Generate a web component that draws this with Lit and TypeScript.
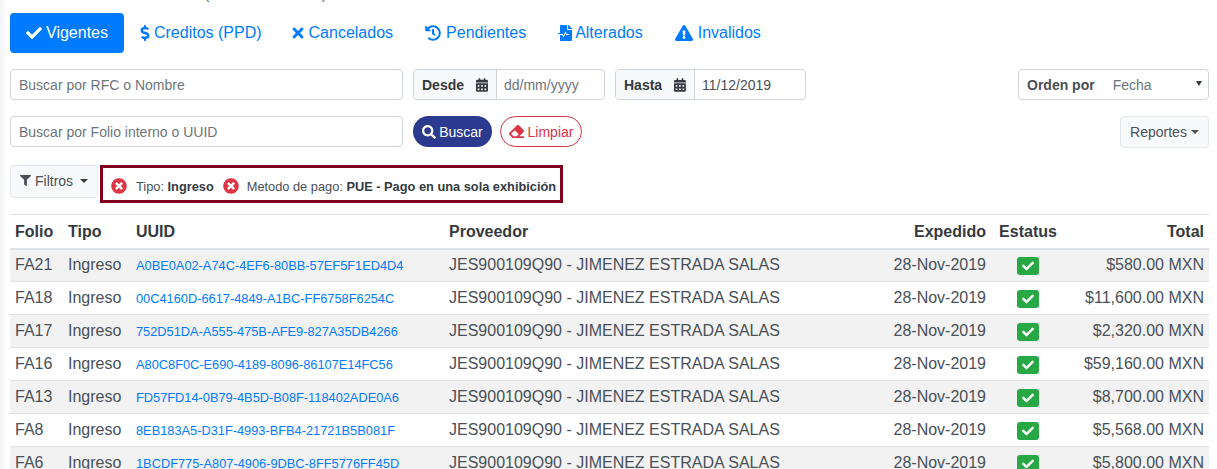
import { LitElement, html, css, svg } from "lit";
import { customElement } from "lit/decorators.js";

const rows = [
  ["FA21", "A0BE0A02-A74C-4EF6-80BB-57EF5F1ED4D4", "$580.00 MXN"],
  ["FA18", "00C4160D-6617-4849-A1BC-FF6758F6254C", "$11,600.00 MXN"],
  ["FA17", "752D51DA-A555-475B-AFE9-827A35DB4266", "$2,320.00 MXN"],
  ["FA16", "A80C8F0C-E690-4189-8096-86107E14FC56", "$59,160.00 MXN"],
  ["FA13", "FD57FD14-0B79-4B5D-B08F-118402ADE0A6", "$8,700.00 MXN"],
  ["FA8", "8EB183A5-D31F-4993-BFB4-21721B5B081F", "$5,568.00 MXN"],
  ["FA6", "1BCDF775-A807-4906-9DBC-8FF5776FF45D", "$5,800.00 MXN"],
];

const P = {
  check: "M173.898 439.404l-166.4-166.4c-9.997-9.997-9.997-26.206 0-36.204l36.203-36.204c9.997-9.998 26.207-9.998 36.204 0L192 312.69 432.095 72.596c9.997-9.997 26.207-9.997 36.204 0l36.203 36.204c9.997 9.997 9.997 26.206 0 36.204l-294.4 294.401c-9.998 9.997-26.207 9.997-36.204-.001z",
  dollar: "M209.2 233.4l-108-31.6C88.7 198.2 80 186.5 80 173.5c0-16.3 13.2-29.5 29.5-29.5h66.3c12.2 0 24.2 3.7 34.2 10.5 6.1 4.1 14.3 3.1 19.5-2l34.8-34c7.1-6.9 6.1-18.4-1.8-24.5C238 74.8 207.4 64.1 176 64V16c0-8.8-7.2-16-16-16h-32c-8.8 0-16 7.2-16 16v48h-2.5C45.8 64-5.4 118.7.5 183.6c4.2 46.1 39.4 83.6 83.8 96.6l102.5 30c12.5 3.7 21.2 15.3 21.2 28.3 0 16.3-13.2 29.5-29.5 29.5h-66.3C100 368 88 364.3 78 357.500c-6.1-4.100-14.300-3.100-19.500 2l-34.800 34c-7.100 6.900-6.100 18.400 1.800 24.500 24.500 19.200 55.100 29.900 86.500 30v48c0 8.800 7.200 16 16 16h32c8.800 0 16-7.200 16-16v-48.200c46.600-.9 90.300-28.600 105.700-72.700 21.500-61.600-14.600-124.800-72.500-141.700z",
  times: "M242.72 256l100.07-100.07c12.28-12.28 12.28-32.19 0-44.48l-22.24-22.24c-12.28-12.28-32.19-12.28-44.48 0L176 189.28 75.93 89.21c-12.28-12.28-32.19-12.28-44.48 0L9.21 111.45c-12.28 12.28-12.28 32.19 0 44.48L109.28 256 9.21 356.07c-12.28 12.28-12.28 32.19 0 44.48l22.24 22.24c12.28 12.28 32.2 12.28 44.48 0L176 322.72l100.07 100.07c12.28 12.28 32.2 12.28 44.48 0l22.24-22.24c12.28-12.28 12.28-32.19 0-44.48L242.72 256z",
  history: "M504 255.531c.253 136.64-111.18 248.372-247.82 248.468-59.015.042-113.223-20.53-155.822-54.911-11.077-8.94-11.905-25.541-1.839-35.607l11.267-11.267c8.609-8.609 22.353-9.551 31.891-1.984C173.062 425.135 212.781 440 256 440c101.705 0 184-82.311 184-184 0-101.705-82.311-184-184-184-48.814 0-93.149 18.969-126.068 49.932l50.754 50.754c10.08 10.08 2.941 27.314-11.313 27.314H24c-8.837 0-16-7.163-16-16V38.627c0-14.254 17.234-21.393 27.314-11.314l49.372 49.372C129.209 34.136 189.552 8 256 8c136.81 0 247.747 110.78 248 247.531zm-180.912 78.784l9.823-12.63c8.138-10.463 6.253-25.542-4.21-33.679L288 256.349V152c0-13.255-10.745-24-24-24h-16c-13.255 0-24 10.745-24 24v135.651l65.409 50.874c10.463 8.137 25.541 6.253 33.679-4.21z",
  file: "M288 132V0H88C74.7 0 64 10.7 64 24v232H8c-4.4 0-8 3.6-8 8v16c0 4.4 3.6 8 8 8h140.9c3 0 5.8 1.7 7.2 4.4l19.9 39.8 56.8-113.7c2.9-5.9 11.4-5.900 14.300 0l34.700 69.500H352c8.800 0 16 7.200 16 16s-7.200 16-16 16h-89.900L240 275.800l-56.800 113.700c-2.900 5.900-11.400 5.900-14.300 0L134.100 320H64v168c0 13.300 10.700 24 24 24h336c13.300 0 24-10.700 24-24V160H316c-15.400 0-28-12.600-28-28zm153-27L343.100 7c-4.500-4.500-10.600-7-17-7H320v128h128v-6.100c0-6.300-2.500-12.400-7-16.900z",
  warn: "M569.517 440.013C587.975 472.007 564.806 512 527.94 512H48.054c-36.937 0-59.999-40.055-41.577-71.987L246.423 23.985c18.467-32.009 64.72-31.951 83.154 0l239.94 416.028zM288 354c-25.405 0-46 20.595-46 46s20.595 46 46 46 46-20.595 46-46-20.595-46-46-46zm-43.673-165.346l7.418 136c.347 6.364 5.609 11.346 11.982 11.346h48.546c6.373 0 11.635-4.982 11.982-11.346l7.418-136c.375-6.874-5.098-12.654-11.982-12.654h-63.383c-6.884 0-12.356 5.78-11.981 12.654z",
  cal: "M0 464c0 26.500 21.500 48 48 48h352c26.500 0 48-21.500 48-48V192H0v272zm320-196c0-6.600 5.400-12 12-12h40c6.600 0 12 5.400 12 12v40c0 6.600-5.400 12-12 12h-40c-6.600 0-12-5.400-12-12v-40zm0 128c0-6.600 5.400-12 12-12h40c6.600 0 12 5.400 12 12v40c0 6.600-5.400 12-12 12h-40c-6.600 0-12-5.400-12-12v-40zM192 268c0-6.600 5.400-12 12-12h40c6.600 0 12 5.400 12 12v40c0 6.600-5.400 12-12 12h-40c-6.600 0-12-5.400-12-12v-40zm0 128c0-6.600 5.400-12 12-12h40c6.600 0 12 5.400 12 12v40c0 6.600-5.400 12-12 12h-40c-6.600 0-12-5.400-12-12v-40zM64 268c0-6.600 5.400-12 12-12h40c6.600 0 12 5.400 12 12v40c0 6.600-5.400 12-12 12H76c-6.600 0-12-5.400-12-12v-40zm0 128c0-6.600 5.400-12 12-12h40c6.600 0 12 5.400 12 12v40c0 6.600-5.400 12-12 12H76c-6.600 0-12-5.400-12-12v-40zM400 64h-48V16c0-8.800-7.200-16-16-16h-32c-8.800 0-16 7.200-16 16v48H160V16c0-8.800-7.200-16-16-16h-32c-8.800 0-16 7.200-16 16v48H48C21.500 64 0 85.500 0 112v48h448v-48c0-26.500-21.500-48-48-48z",
  search: "M505 442.7L405.3 343c-4.500-4.500-10.600-7-17-7H372c27.600-35.300 44-79.700 44-128C416 93.100 322.900 0 208 0S0 93.100 0 208s93.100 208 208 208c48.300 0 92.700-16.400 128-44v16.300c0 6.400 2.500 12.500 7 17l99.700 99.700c9.400 9.400 24.600 9.400 33.900 0l28.300-28.300c9.400-9.400 9.400-24.600.1-34zM208 336c-70.700 0-128-57.200-128-128 0-70.700 57.200-128 128-128 70.700 0 128 57.200 128 128 0 70.700-57.200 128-128 128z",
  eraser: "M497.941 273.941c18.745-18.745 18.745-49.137 0-67.882l-160-160c-18.745-18.745-49.136-18.746-67.883 0l-256 256c-18.745 18.745-18.745 49.137 0 67.882l96 96A48.004 48.004 0 0 0 144 480h356c6.627 0 12-5.373 12-12v-40c0-6.627-5.373-12-12-12H355.883l142.058-142.059zm-302.627-62.627l137.373 137.373L265.373 416H150.628l-80-80 124.686-124.686z",
  filter: "M487.976 0H24.028C2.710 0-8.047 25.866 7.058 40.971L192 225.941V432c0 7.831 3.821 15.170 10.237 19.662l80 55.980C298.020 518.690 320 507.493 320 487.980V225.941l184.947-184.970C520.021 25.896 509.338 0 487.976 0z",
  xc: "M256 8C119 8 8 119 8 256s111 248 248 248 248-111 248-248S393 8 256 8zm121.600 313.100c4.700 4.700 4.700 12.300 0 17L338 377.600c-4.700 4.700-12.300 4.700-17 0L256 312l-65.100 65.600c-4.700 4.700-12.300 4.700-17 0L134.400 338c-4.700-4.700-4.700-12.300 0-17l65.600-65-65.600-65.100c-4.700-4.700-4.700-12.300 0-17l39.600-39.600c4.700-4.700 12.300-4.700 17 0l65 65.700 65.100-65.600c4.700-4.700 12.300-4.700 17 0l39.600 39.600c4.700 4.700 4.700 12.300 0 17L312 256l65.600 65.100z",
};

const fa = (d: string, vw: number, w: number, h = 16, cls = "ic") =>
  html`<svg class=${cls} width=${w} height=${h} viewBox="0 0 ${vw} 512" fill="currentColor">${svg`<path d=${d}/>`}</svg>`;
const caret = html`<span class="caret"></span>`;

@customElement("app-root")
export class AppRoot extends LitElement {
  static styles = css`
    :host { display: block; height: 469px; overflow: hidden; font-family: "Liberation Sans", Arial, sans-serif; font-size: 16px; color: #212529; background: linear-gradient(to right, #f5f5f5, #fff 8px); }
    .page { padding: 0 8px 0 10px; }
    .clip { height: 3px; overflow: hidden; width: 123px; margin: 0 0 10px 194px; display: flex; justify-content: space-between; color: #6c757d; font-size: 16px; line-height: 18px; }
    .clip span { margin-top: -15px; display: block; }
    .tabs { display: flex; height: 40px; font-size: 16px; color: #007bff; }
    .tab { display: flex; align-items: center; padding: 0 16px; border-radius: 4px; white-space: nowrap; }
    .tab.active { background: #007bff; color: #fff; }
    .tab.tight { padding-right: 14px; }
    .g3 { gap: 3px; } .g4 { gap: 4px; } .g5 { gap: 5px; }
    .ic { flex: none; }
    .row { display: flex; align-items: flex-start; }
    .r1 { margin-top: 16px; height: 31px; }
    .r2 { margin-top: 16px; height: 32px; }
    .input { box-sizing: border-box; height: 31px; border: 1px solid #ced4da; border-radius: 4px; padding: 0 8px; display: flex; align-items: center; font-size: 14px; color: #6c757d; background: #fff; }
    .wide { width: 393px; }
    .group { display: flex; height: 31px; box-sizing: border-box; border: 1px solid #ced4da; border-radius: 4px; font-size: 14px; overflow: hidden; background: #fff; }
    .label { background: #f8f9fa; border-right: 1px solid #ced4da; display: flex; align-items: center; gap: 12px; padding: 0 8px; font-weight: 700; color: #343a40; box-sizing: border-box; }
    .val { display: flex; align-items: center; padding: 0 7px; color: #6c757d; }
    .val.filled { color: #495057; }
    .cal { color: #343a40; }
    .desde { margin-left: 10px; width: 192px; }
    .desde .label { width: 83px; }
    .hasta { margin-left: 10px; width: 191px; }
    .hasta .label { width: 79px; }
    .orden { margin-left: auto; width: 191px; align-items: center; padding-left: 8px; color: #495057; position: relative; }
    .orden span.f { margin-left: 18px; color: #6c757d; }
    .tri { position: absolute; right: 6px; top: 11px; width: 0; height: 0; border-left: 3px solid transparent; border-right: 3px solid transparent; border-top: 5px solid #343a40; }
    .pill { box-sizing: border-box; height: 31px; border-radius: 16px; display: flex; align-items: center; font-size: 14px; }
    .buscar { margin-left: 10px; width: 79px; background: #2b3a8f; color: #fff; justify-content: center; gap: 3px; }
    .limpiar { margin-left: 8px; width: 82px; border: 1px solid #dc3545; color: #dc3545; justify-content: center; gap: 4px; }
    .btn-light { box-sizing: border-box; background: #f8f9fa; border: 1px solid #e3e6ea; border-radius: 4px; display: flex; align-items: center; font-size: 14px; color: #495057; }
    .reportes { margin-left: auto; width: 89px; height: 32px; justify-content: center; gap: 4px; }
    .caret { width: 0; height: 0; border-left: 4px solid transparent; border-right: 4px solid transparent; border-top: 4px solid currentColor; display: inline-block; }
    .r3 { margin-top: 17px; height: 38px; }
    .filtros { width: 88px; height: 33px; padding: 0 0 2px 9px; gap: 4px; }
    .filtros .caret { margin-left: 3px; color: #343a40; }
    .chips { margin-left: 2px; box-sizing: border-box; height: 38px; width: 463px; border: 3px solid #800020; display: flex; align-items: center; padding: 3px 0 0 8px; font-size: 12.8px; color: #495057; white-space: nowrap; }
    .chips b { color: #343a40; font-weight: 700; }
    .xc { color: #dc3545; flex: none; }
    .chips .t { margin-left: 9px; margin-top: 1px; }
    .chips .t + .xc { margin-left: 9px; }
    .chips .xc + .t.last { margin-left: 8px; }
    table { border-collapse: collapse; width: 1199px; table-layout: fixed; margin-top: 11px; font-size: 16px; color: #495057; }
    th { font-weight: 700; color: #343a40; text-align: left; height: 34px; padding: 2px 5px 0; border-top: 1px solid #dee2e6; border-bottom: 2px solid #dee2e6; box-sizing: border-box; }
    td { height: 33px; box-sizing: border-box; padding: 0 5px; border-bottom: 1px solid #dee2e6; white-space: nowrap; }
    tbody tr:nth-child(odd) { background: #f2f2f2; }
    .right { text-align: right; }
    th.center, .center { text-align: center; }
    .uuid { font-size: 12.8px; color: #007bff; }
    .status { display: inline-flex; width: 22px; height: 18px; background: #28a745; border-radius: 3px; color: #fff; align-items: center; justify-content: center; vertical-align: middle; margin-top: 2px; }
  `;

  render() {
    return html`<div class="page">
      <div class="clip"><span>(</span><span>)</span></div>
      <div class="tabs">
        <div class="tab active g4">${fa(P.check, 512, 16)}Vigentes</div>
        <div class="tab tight g4">${fa(P.dollar, 288, 10)}Creditos (PPD)</div>
        <div class="tab g5">${fa(P.times, 352, 12)}Cancelados</div>
        <div class="tab g5">${fa(P.history, 512, 16)}Pendientes</div>
        <div class="tab g3">${fa(P.file, 448, 14)}Alterados</div>
        <div class="tab g5">${fa(P.warn, 576, 18)}Invalidos</div>
      </div>

      <div class="row r1">
        <div class="input wide">Buscar por RFC o Nombre</div>
        <div class="group desde"><div class="label">Desde ${fa(P.cal, 448, 12.25, 14, "cal")}</div><div class="val">dd/mm/yyyy</div></div>
        <div class="group hasta"><div class="label">Hasta ${fa(P.cal, 448, 12.25, 14, "cal")}</div><div class="val filled">11/12/2019</div></div>
        <div class="group orden"><b>Orden por</b><span class="f">Fecha</span><span class="tri"></span></div>
      </div>

      <div class="row r2">
        <div class="input wide">Buscar por Folio interno o UUID</div>
        <div class="pill buscar">${fa(P.search, 512, 14, 14)}Buscar</div>
        <div class="pill limpiar">${fa(P.eraser, 512, 15, 15)}Limpiar</div>
        <div class="btn-light reportes">Reportes${caret}</div>
      </div>

      <div class="row r3">
        <div class="btn-light filtros">${fa(P.filter, 512, 11, 11)}Filtros${caret}</div>
        <div class="chips">
          ${fa(P.xc, 512, 16, 16, "xc")}<span class="t">Tipo: <b>Ingreso</b></span>${fa(P.xc, 512, 16, 16, "xc")}<span class="t last">Metodo de pago: <b>PUE - Pago en una sola exhibición</b></span>
        </div>
      </div>

      <table>
        <colgroup><col style="width:53px"/><col style="width:68px"/><col style="width:313px"/><col style="width:373px"/><col style="width:174px"/><col style="width:74px"/><col style="width:144px"/></colgroup>
        <thead><tr><th>Folio</th><th>Tipo</th><th>UUID</th><th>Proveedor</th><th class="right">Expedido</th><th class="center">Estatus</th><th class="right">Total</th></tr></thead>
        <tbody>
          ${rows.map((r) => html`<tr>
            <td>${r[0]}</td><td>Ingreso</td><td class="uuid">${r[1]}</td>
            <td>JES900109Q90 - JIMENEZ ESTRADA SALAS</td><td class="right">28-Nov-2019</td>
            <td class="center"><span class="status">${fa(P.check, 512, 12, 12)}</span></td>
            <td class="right">${r[2]}</td></tr>`)}
        </tbody>
      </table>
    </div>`;
  }
}
